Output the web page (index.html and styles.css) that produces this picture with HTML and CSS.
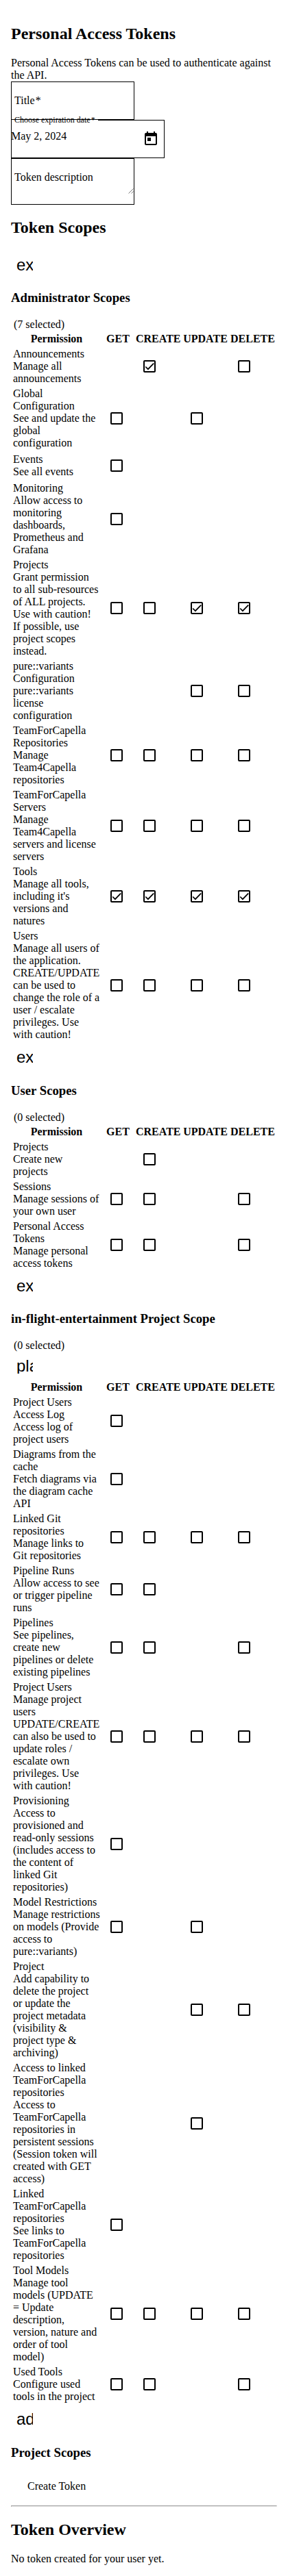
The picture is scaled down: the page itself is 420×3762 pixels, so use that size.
FILE: index.html
```
<!DOCTYPE html>
<html lang="en">
<head>
<meta charset="utf-8">
<title>Personal Access Tokens</title>
<link rel="stylesheet" href="styles.css">
</head>
<body>
<h2>Personal Access Tokens</h2>
<div>Personal Access Tokens can be used to authenticate against the API.</div>
<div class="field"><span class="label">Title<span class="star">*</span></span></div>
<div class="field date">
  <span class="notch">Choose expiration date<span class="star">*</span></span>
  <span class="value">May 2, 2024</span>
  <svg class="calendar" viewBox="0 0 24 24"><path d="M19 3h-1V1h-2v2H8V1H6v2H5c-1.11 0-1.99.9-1.99 2L3 19c0 1.1.89 2 2 2h14c1.1 0 2-.9 2-2V5c0-1.1-.9-2-2-2zm0 16H5V8h14v11zM7 10h5v5H7z"/></svg>
</div>
<div class="field area"><span class="label">Token description</span>
  <svg class="grip" viewBox="0 0 8 8"><path d="M0.5 7.5L7.5 0.5M4.5 7.5L7.5 4.5"/></svg>
</div>
<h2>Token Scopes</h2>
<div id="scopes"></div>
<div class="icon-button"><span class="icon">ad</span></div>
<h3>Project Scopes</h3>
<div class="create">Create Token</div>
<hr>
<h2>Token Overview</h2>
<div>No token created for your user yet.</div>
<script src="scopes.js"></script>
</body>
</html>
```
FILE: styles.css
```
body {
  margin: 0;
  padding: 16px;
  font: 16px/18px "Liberation Serif", serif;
  color: #000;
  background: #fff;
}
h2 { font-size: 24px; line-height: 27px; margin: 19.92px 0; }
h3 { font-size: 18.72px; line-height: 22px; margin: 18.72px 0; }
hr { margin: 8px 0; }

.field {
  position: relative;
  box-sizing: border-box;
  width: 180px;
  height: 56px;
  border: 1px solid #000;
  padding: 18px 4px;
}
.star { margin-left: 1px; }
.date {
  display: flex;
  justify-content: space-between;
  width: 224px;
  padding: 15px 7px 0 0;
  border-top: 0;
}
.date::before {
  content: "";
  position: absolute;
  top: 0;
  left: 126px;
  right: 0;
  border-top: 1px solid #000;
}
.notch {
  position: absolute;
  left: 4px;
  top: -7px;
  font-size: 12px;
  line-height: 14px;
}
.value { margin-left: -1px; }
.calendar { width: 24px; height: 24px; margin-top: 1px; }
.area { height: 68px; }
.grip {
  position: absolute;
  right: 0;
  top: 43px;
  width: 8px;
  height: 8px;
  fill: none;
  stroke: #555;
  stroke-width: 0.8;
}

.icon-button { height: 24px; padding: 8px; }
.icon {
  display: block;
  width: 24px;
  height: 24px;
  overflow: hidden;
  white-space: nowrap;
  font: 24px/26px "Liberation Sans", sans-serif;
}
.count { padding-left: 4px; }

.scopes { table-layout: fixed; width: 388px; border-spacing: 2px; }
.scopes th, .scopes td { padding: 1px; }
.c-name { width: 129px; }
.c-get { width: 46px; }
.c-other { width: 67px; }
.box {
  width: 14px;
  height: 14px;
  margin: 11px;
  border: 2px solid #000;
  border-radius: 2px;
}
.box svg { display: block; width: 14px; height: 14px; }
.box path { fill: none; stroke: #000; stroke-width: 1.7; }
.create { padding: 11px 24px; }
```
FILE: scopes.js
```
// Permission flags per verb (GET, CREATE, UPDATE, DELETE): "-" unavailable, "o" unchecked, "x" checked
const groups = [
  { title: "Administrator Scopes", icon: "ex", selected: 7, rows: [
    ["Announcements", "Manage all announcements", "-x-o"],
    ["Global Configuration", "See and update the global configuration", "o-o-"],
    ["Events", "See all events", "o---"],
    ["Monitoring", "Allow access to monitoring dashboards, Prometheus and Grafana", "o---"],
    ["Projects", "Grant permission to all sub-resources of ALL projects. Use with caution! If possible, use project scopes instead.", "ooxx"],
    ["pure::variants Configuration", "pure::variants license configuration", "--oo"],
    ["TeamForCapella Repositories", "Manage Team4Capella repositories", "oooo"],
    ["TeamForCapella Servers", "Manage Team4Capella servers and license servers", "oooo"],
    ["Tools", "Manage all tools, including it's versions and natures", "xxxx"],
    ["Users", "Manage all users of the application. CREATE/UPDATE can be used to change the role of a user / escalate privileges. Use with caution!", "oooo"]
  ]},
  { title: "User Scopes", icon: "ex", selected: 0, rows: [
    ["Projects", "Create new projects", "-o--"],
    ["Sessions", "Manage sessions of your own user", "oo-o"],
    ["Personal Access Tokens", "Manage personal access tokens", "oo-o"]
  ]},
  { title: "in-flight-entertainment Project Scope", icon: "ex", selected: 0, action: "pla", rows: [
    ["Project Users Access Log", "Access log of project users", "o---"],
    ["Diagrams from the cache", "Fetch diagrams via the diagram cache API", "o---"],
    ["Linked Git repositories", "Manage links to Git repositories", "oooo"],
    ["Pipeline Runs", "Allow access to see or trigger pipeline runs", "oo--"],
    ["Pipelines", "See pipelines, create new pipelines or delete existing pipelines", "oo-o"],
    ["Project Users", "Manage project users UPDATE/CREATE can also be used to update roles / escalate own privileges. Use with caution!", "oooo"],
    ["Provisioning", "Access to provisioned and read-only sessions (includes access to the content of linked Git repositories)", "o---"],
    ["Model Restrictions", "Manage restrictions on models (Provide access to pure::variants)", "o-o-"],
    ["Project", "Add capability to delete the project or update the project metadata (visibility &amp; project type &amp; archiving)", "--oo"],
    ["Access to linked TeamForCapella repositories", "Access to TeamForCapella repositories in persistent sessions (Session token will created with GET access)", "--o-"],
    ["Linked TeamForCapella repositories", "See links to TeamForCapella repositories", "o---"],
    ["Tool Models", "Manage tool models (UPDATE = Update description, version, nature and order of tool model)", "oooo"],
    ["Used Tools", "Configure used tools in the project", "oo-o"]
  ]}
];

const button = name => `<div class="icon-button"><span class="icon">${name}</span></div>`;
const cell = flag => flag === "-" ? "<td></td>" :
  `<td><div class="box">${
    flag === "x" ? '<svg viewBox="2 2 14 14"><path d="M3.2 9.5L6.9 13.2L15.2 4.6"/></svg>' : ""}</div></td>`;

document.getElementById("scopes").innerHTML = groups.map(g => `
  ${button(g.icon)}
  <h3>${g.title}</h3>
  <div class="count">(${g.selected} selected)</div>
  ${g.action ? button(g.action) : ""}
  <table class="scopes">
    <colgroup><col class="c-name"><col class="c-get"><col class="c-other"><col class="c-other"><col class="c-other"></colgroup>
    <tr><th>Permission</th><th>GET</th><th>CREATE</th><th>UPDATE</th><th>DELETE</th></tr>
    ${g.rows.map(([name, text, flags]) =>
      `<tr><td><div>${name}</div><div>${text}</div></td>${[...flags].map(cell).join("")}</tr>`).join("")}
  </table>`).join("");
```
